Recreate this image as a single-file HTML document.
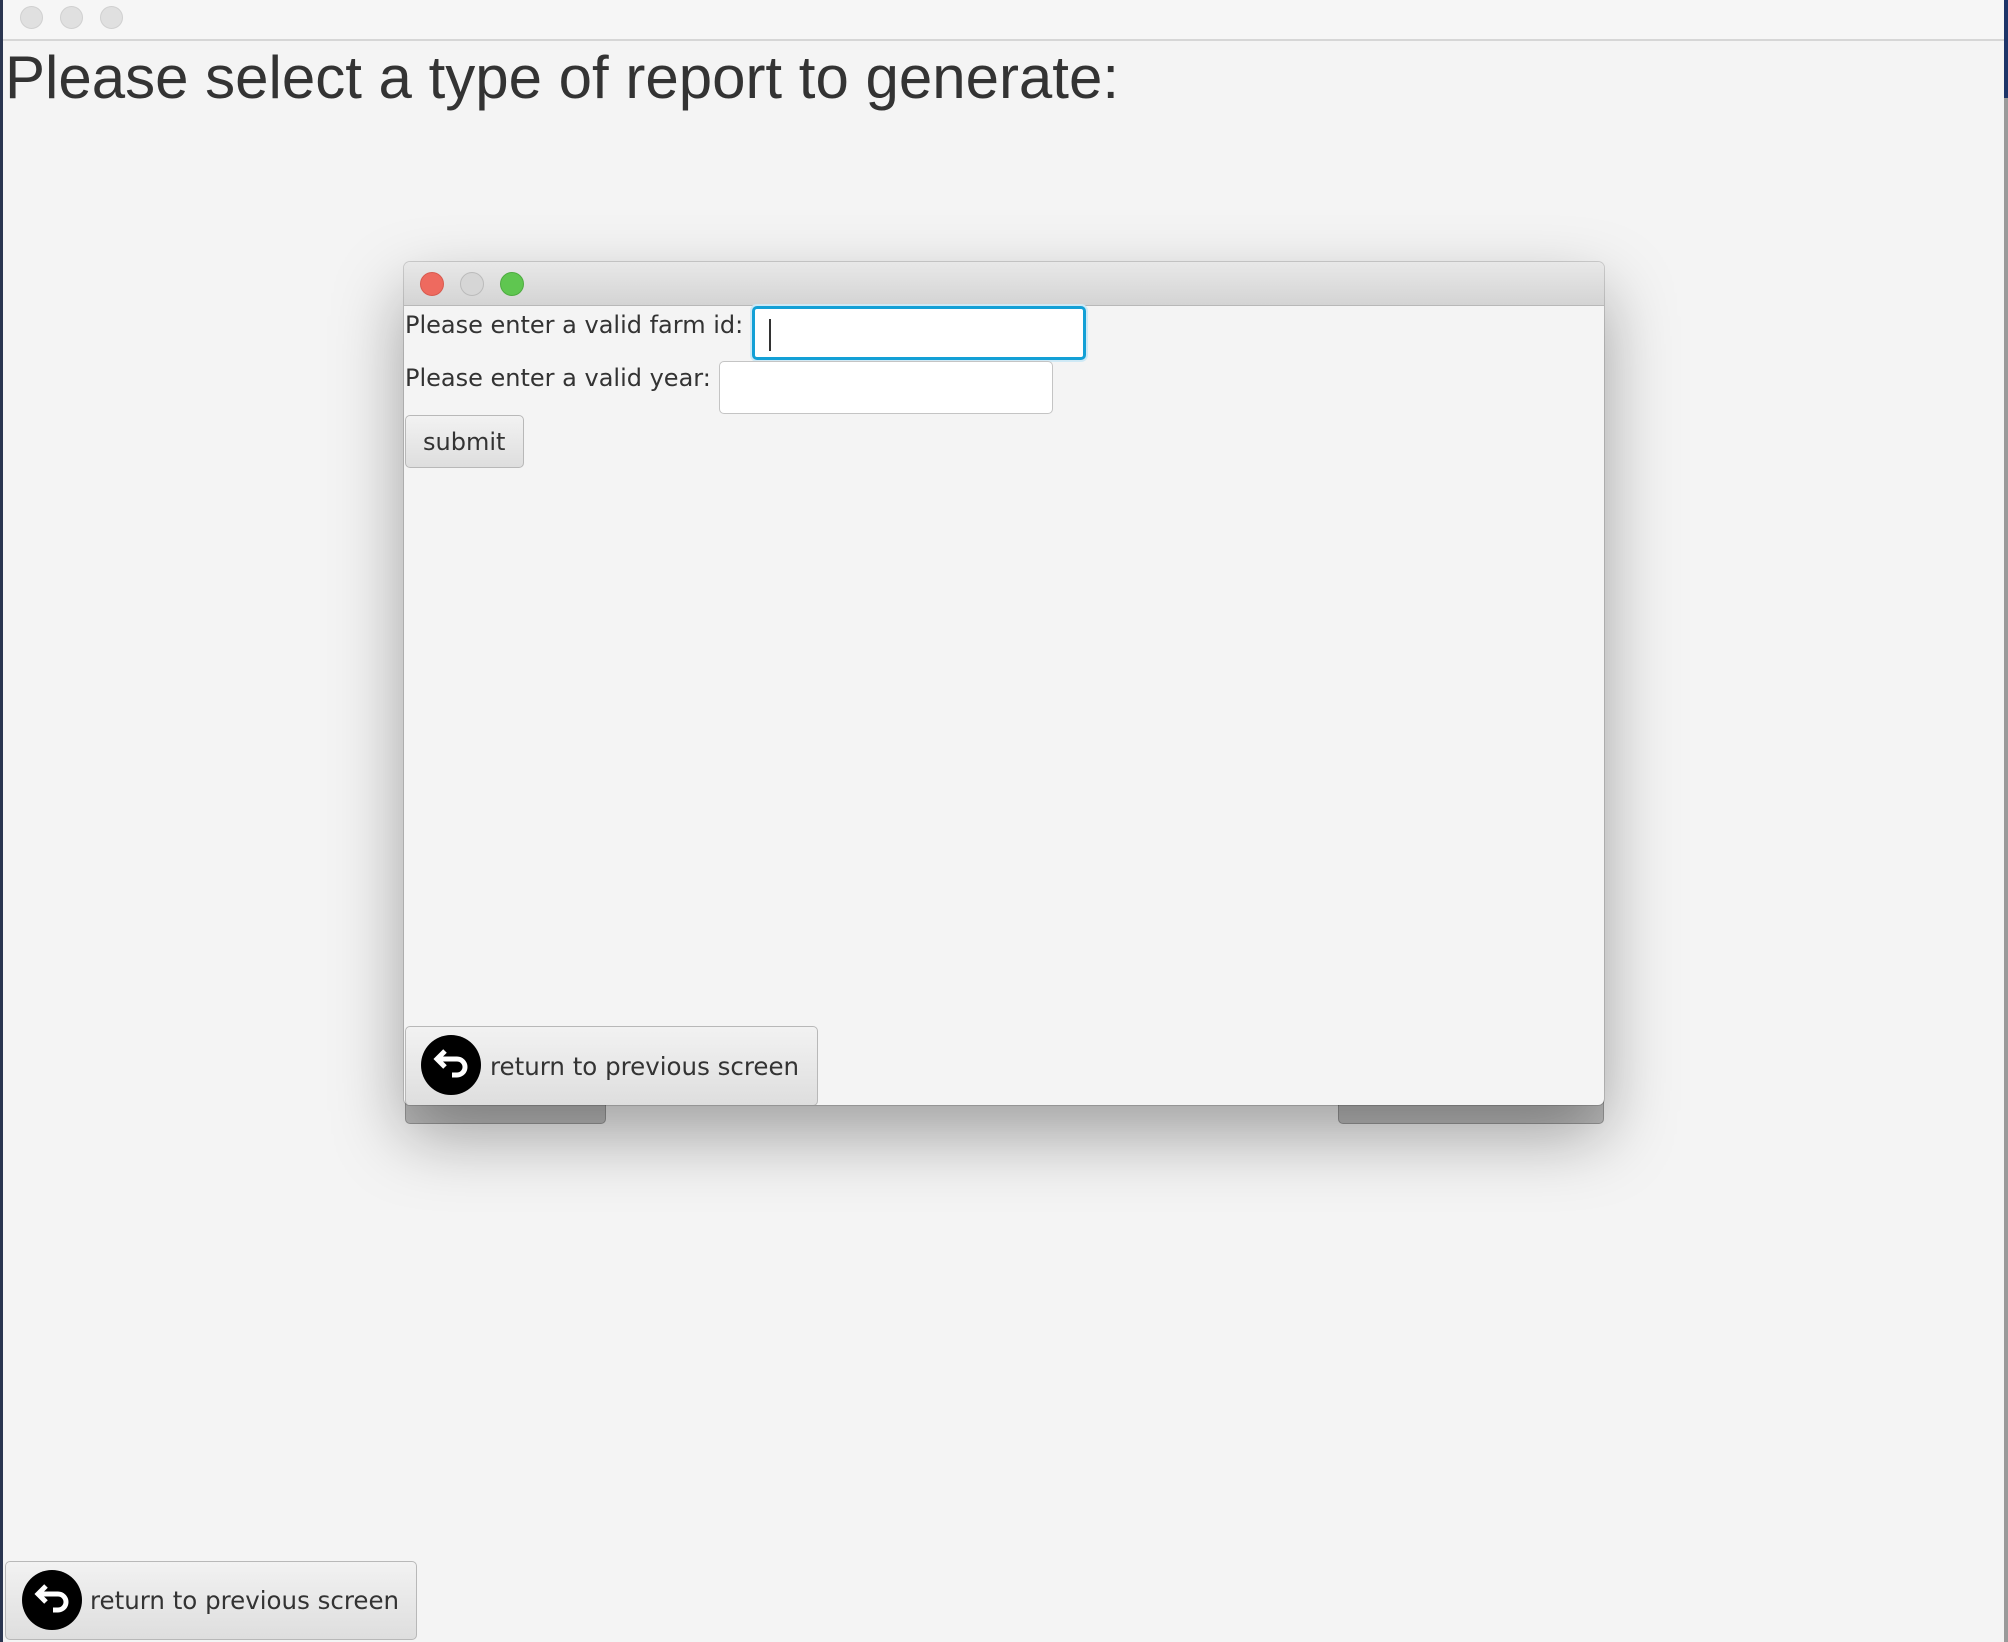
<!DOCTYPE html>
<html><head><meta charset="utf-8"><style>
html,body{margin:0;padding:0}
body{width:2008px;height:1642px;background:#f4f4f4;position:relative;overflow:hidden;font-family:"Liberation Sans","DejaVu Sans",sans-serif;color:#333}
.abs{position:absolute}
.tl{position:absolute;width:23px;height:23px;border-radius:50%;box-sizing:border-box}
.btn{position:absolute;box-sizing:border-box;border:1.5px solid #b8b8b8;border-radius:5px;background:linear-gradient(#f2f2f2,#dedede);}
.ico{position:absolute;width:60px;height:60px}
.txt{position:absolute;font-family:"DejaVu Sans","Liberation Sans",sans-serif;color:#333;white-space:nowrap}
</style></head><body>
<div class="abs" style="left:0;top:0;width:3px;height:1642px;background:#2a3550"></div>
<div class="abs" style="left:2004px;top:0;width:4px;height:98px;background:#1d3468"></div>
<div class="abs" style="left:2004px;top:98px;width:4px;height:1544px;background:#9a9a9a"></div>
<div class="abs" style="left:3px;top:0;width:2001px;height:39px;background:#f6f6f6;border-bottom:2px solid #d6d6d6"></div>
<div class="tl" style="left:20px;top:6px;background:#e0e0e0;border:1px solid #d0d0d0"></div>
<div class="tl" style="left:60px;top:6px;background:#e0e0e0;border:1px solid #d0d0d0"></div>
<div class="tl" style="left:100px;top:6px;background:#e0e0e0;border:1px solid #d0d0d0"></div>
<div class="abs" style="left:5px;top:40px;font-size:60px;line-height:76px;color:#333">Please select a type of report to generate:</div>

<div class="btn" style="left:405px;top:1080px;width:201px;height:44px;background:#bdbdbd;border-color:#999"></div>
<div class="btn" style="left:1338px;top:1080px;width:266px;height:44px;background:#bdbdbd;border-color:#999"></div>

<div class="abs" style="left:404px;top:262px;width:1200px;height:843px;background:#f4f4f4;border-radius:6px;box-shadow:0 30px 70px rgba(0,0,0,0.35),0 0 0 1px rgba(0,0,0,0.15);overflow:hidden">
  <div class="abs" style="left:0;top:0;width:1200px;height:43px;background:linear-gradient(#e8e8e8,#d4d4d4);border-bottom:1px solid #b8b8b8"></div>
  <div class="tl" style="left:16px;top:10px;width:24px;height:24px;background:#ee6a5f;border:1px solid #d85a4f"></div>
  <div class="tl" style="left:56px;top:10px;width:24px;height:24px;background:#d6d6d6;border:1px solid #bbb"></div>
  <div class="tl" style="left:96px;top:10px;width:24px;height:24px;background:#5fc650;border:1px solid #4eac40"></div>
  <div class="txt" style="left:1px;top:46px;font-size:24px;line-height:34px">Please enter a valid farm id:</div>
  <div class="abs" style="left:348px;top:44px;width:334px;height:54px;box-sizing:border-box;background:#fff;border:3px solid #13a0d6;border-radius:5px;box-shadow:0 0 0 2px #cfe9f5"></div>
  <div class="abs" style="left:365px;top:57px;width:2px;height:32px;background:#333"></div>
  <div class="txt" style="left:1px;top:99px;font-size:24px;line-height:34px">Please enter a valid year:</div>
  <div class="abs" style="left:315px;top:99px;width:334px;height:53px;box-sizing:border-box;background:#fff;border:1.5px solid #c4c4c4;border-radius:5px"></div>
  <div class="btn" style="left:1px;top:153px;width:119px;height:53px"></div>
  <div class="txt" style="left:19px;top:163px;font-size:24px;line-height:34px">submit</div>
  <div class="btn" style="left:1px;top:764px;width:413px;height:80px"></div>
  <svg class="ico" style="left:17px;top:773px" viewBox="0 0 60 60"><circle cx="30" cy="30" r="30" fill="#000"/><path d="M16 24H36a8 8 0 0 1 0 16H31M24 16L16 24L24 32" fill="none" stroke="#fff" stroke-width="5"/></svg>
  <div class="txt" style="left:86px;top:787px;font-size:24.5px;line-height:36px">return to previous screen</div>
</div>

<div class="btn" style="left:5px;top:1561px;width:412px;height:79px"></div>
<svg class="ico" style="left:22px;top:1570px" viewBox="0 0 60 60"><circle cx="30" cy="30" r="30" fill="#000"/><path d="M16 24H36a8 8 0 0 1 0 16H31M24 16L16 24L24 32" fill="none" stroke="#fff" stroke-width="5"/></svg>
<div class="txt" style="left:90px;top:1583px;font-size:24.5px;line-height:36px">return to previous screen</div>
</body></html>
